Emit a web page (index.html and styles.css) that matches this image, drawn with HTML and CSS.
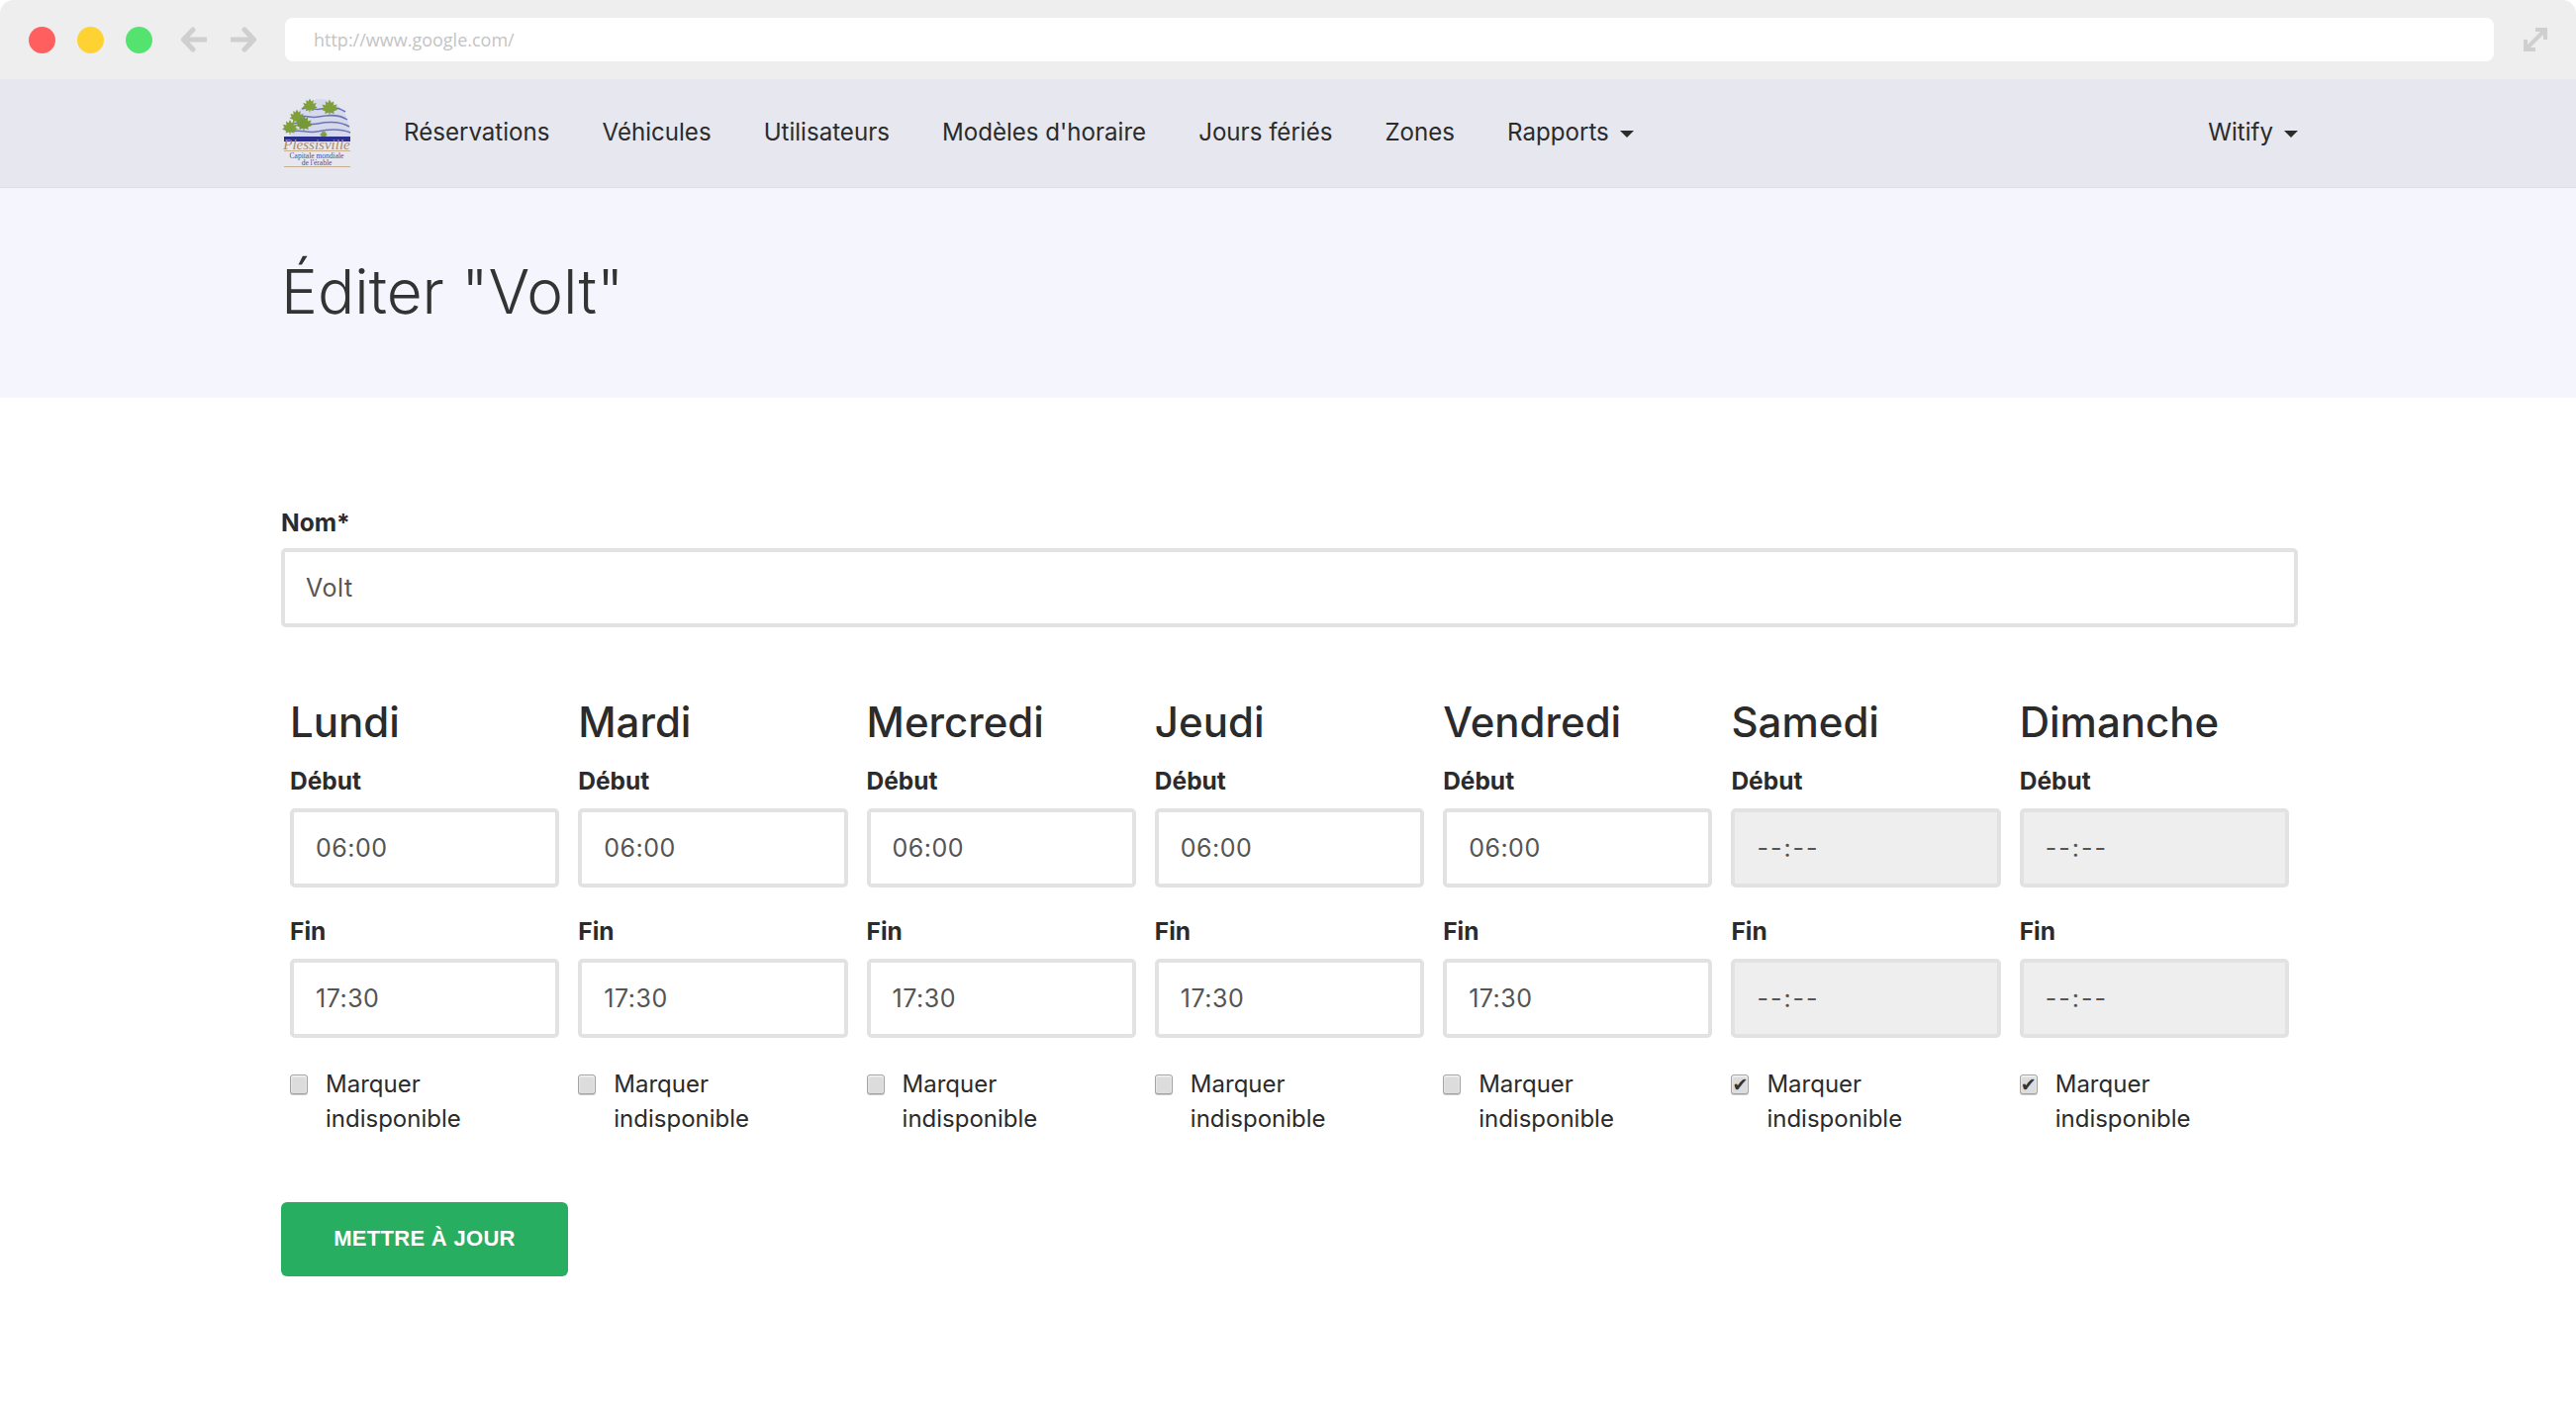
FILE: index.html
```html
<!DOCTYPE html>
<html lang="fr">
    <head>
        <meta charset="UTF-8" />
        <meta name="viewport" content="width=device-width, initial-scale=1.0" />
        <title>Éditer "Volt"</title>
        <link rel="stylesheet" href="styles.css">
    </head>
    <body>
        <div class="browser-bar">
            <span class="dot dot-red"></span>
            <span class="dot dot-yellow"></span>
            <span class="dot dot-green"></span>
            <svg class="arrow" width="26" height="26" viewBox="0 0 26 26"><path d="M12 3 2.5 13 12 23M3 13h22" /></svg>
            <svg class="arrow" width="26" height="26" viewBox="0 0 26 26"><path d="M14 3 23.500 13 14 23M23 13H1" /></svg>
            <div class="url">http://www.google.com/</div>
            <svg class="expand" width="24" height="24" viewBox="0 0 24 24"><path d="M2 22 22 2M12 2h10v10M2 12v10h10" /></svg>
        </div>

        <nav class="navbar">
            <div class="container navbar-inner">
                <svg class="logo" width="70" height="72" viewBox="0 0 70 72">
                    <defs>
                        <path id="leaf" d="M0-10 2-6 5-8 4.500-3 9-4 7 0 10 2 5 4 5.500 7 1 5.500 0 10-1 5.500-5.500 7-5 4-10 2-7 0-9-4-4.500-3-5-8-2-6z" />
                    </defs>
                    <path d="M9 39C9 15 24 1 39 1s30 14 30 38z" fill="#d6d9ec" />
                    <path d="M20 11c8-3 12 2 20 0s14-3 24 3M13 19c10-3 14 2 24 0s20-3 29 3M10 26c10-3 16 2 26 0s22-3 32 3M9 34c10-3 16 2 26 0s24-3 34 1" fill="none" stroke="#6d74b6" stroke-width="1.500" />
                    <use href="#leaf" transform="translate(28 8) scale(.75)" fill="#7f9f3b" />
                    <use href="#leaf" transform="translate(48 10) scale(.85)" fill="#7f9f3b" />
                    <use href="#leaf" transform="translate(15 19) scale(.75)" fill="#7f9f3b" />
                    <use href="#leaf" transform="translate(22 26) scale(.85)" fill="#76983a" />
                    <use href="#leaf" transform="translate(8 30) scale(.8)" fill="#7f9f3b" />
                    <use href="#leaf" transform="translate(42 37) scale(.4)" fill="#7f9f3b" />
                    <rect x="2" y="39" width="67" height="5" fill="#2b2f8e" />
                    <text class="logo-name" x="35" y="52" text-anchor="middle">Plessisville</text>
                    <rect x="2" y="53" width="67" height="1" fill="#c8ae8c" />
                    <text class="logo-small" x="35" y="61" text-anchor="middle">Capitale mondiale</text>
                    <text class="logo-small" x="35" y="68" text-anchor="middle">de l'érable</text>
                    <rect x="2" y="69" width="67" height="1" fill="#c8ae8c" />
                </svg>
                <ul class="nav-links">
                    <li><a href="#">Réservations</a></li>
                    <li><a href="#">Véhicules</a></li>
                    <li><a href="#">Utilisateurs</a></li>
                    <li><a href="#">Modèles d'horaire</a></li>
                    <li><a href="#">Jours fériés</a></li>
                    <li><a href="#">Zones</a></li>
                    <li><a href="#" class="caret">Rapports</a></li>
                </ul>
                <a href="#" class="caret user-link">Witify</a>
            </div>
        </nav>

        <header class="hero">
            <div class="container">
                <h1>Éditer "Volt"</h1>
            </div>
        </header>

        <form class="container edit-form" action="">
            <div class="field-name">
                <label for="name">Nom*</label>
                <input type="text" id="name" class="input" value="Volt" />
            </div>

            <div class="days">
                <div class="day">
                    <h2>Lundi</h2>
                    <label>Début</label>
                    <input type="text" class="input" value="06:00" />
                    <label>Fin</label>
                    <input type="text" class="input" value="17:30" />
                    <label class="off"><input type="checkbox" /><span>Marquer indisponible</span></label>
                </div>
                <div class="day">
                    <h2>Mardi</h2>
                    <label>Début</label>
                    <input type="text" class="input" value="06:00" />
                    <label>Fin</label>
                    <input type="text" class="input" value="17:30" />
                    <label class="off"><input type="checkbox" /><span>Marquer indisponible</span></label>
                </div>
                <div class="day">
                    <h2>Mercredi</h2>
                    <label>Début</label>
                    <input type="text" class="input" value="06:00" />
                    <label>Fin</label>
                    <input type="text" class="input" value="17:30" />
                    <label class="off"><input type="checkbox" /><span>Marquer indisponible</span></label>
                </div>
                <div class="day">
                    <h2>Jeudi</h2>
                    <label>Début</label>
                    <input type="text" class="input" value="06:00" />
                    <label>Fin</label>
                    <input type="text" class="input" value="17:30" />
                    <label class="off"><input type="checkbox" /><span>Marquer indisponible</span></label>
                </div>
                <div class="day">
                    <h2>Vendredi</h2>
                    <label>Début</label>
                    <input type="text" class="input" value="06:00" />
                    <label>Fin</label>
                    <input type="text" class="input" value="17:30" />
                    <label class="off"><input type="checkbox" /><span>Marquer indisponible</span></label>
                </div>
                <div class="day">
                    <h2>Samedi</h2>
                    <label>Début</label>
                    <input type="text" class="input input-off" value="--:--" disabled />
                    <label>Fin</label>
                    <input type="text" class="input input-off" value="--:--" disabled />
                    <label class="off"><input type="checkbox" checked /><span>Marquer indisponible</span></label>
                </div>
                <div class="day">
                    <h2>Dimanche</h2>
                    <label>Début</label>
                    <input type="text" class="input input-off" value="--:--" disabled />
                    <label>Fin</label>
                    <input type="text" class="input input-off" value="--:--" disabled />
                    <label class="off"><input type="checkbox" checked /><span>Marquer indisponible</span></label>
                </div>
            </div>

            <button type="button" class="btn-save">Mettre à jour</button>
        </form>
    </body>
</html>
```

FILE: styles.css
```css
* {
    box-sizing: border-box;
}

html,
body {
    height: 100%;
}

body {
    margin: 0;
    overflow: hidden;
    color: #2b2b2b;
    background-color: #fff;
    font-family: "Inter", "Liberation Sans", sans-serif;
    font-size: 24px;
}

.container {
    width: 2038px;
    margin-left: 284px;
}

/* fake browser chrome */
.browser-bar {
    display: flex;
    align-items: center;
    height: 80px;
    padding: 0 29px;
    border-radius: 14px 14px 0 0;
    background-color: #eee;
}

.dot {
    width: 27px;
    height: 27px;
    margin-right: 22px;
    border-radius: 50%;
}

.dot-red {
    background-color: #ff5f5f;
}

.dot-yellow {
    background-color: #ffd234;
}

.dot-green {
    margin-right: 29px;
    background-color: #55e370;
}

.arrow {
    margin-right: 24px;
    fill: none;
    stroke: #cfcfcf;
    stroke-width: 5;
    stroke-linecap: round;
    stroke-linejoin: round;
}

.url {
    flex: 1;
    height: 44px;
    margin-left: 5px;
    padding-left: 29px;
    border-radius: 8px;
    color: #c4c4c4;
    background-color: #fff;
    font-family: "Open Sans", sans-serif;
    font-size: 18px;
    line-height: 44px;
}

.expand {
    margin-left: 30px;
    fill: none;
    stroke: #cfcfcf;
    stroke-width: 4;
}

/* navbar */
.navbar {
    height: 110px;
    border-bottom: 1px solid #dfe0e6;
    background-color: #e6e7ef;
    font-size: 24.100px;
}

.navbar-inner {
    display: flex;
    align-items: center;
    height: 100%;
}

.logo {
    flex: none;
    margin-left: 1px;
}

.logo-name {
    fill: #a98a63;
    font-family: "Liberation Serif", serif;
    font-size: 15px;
    font-style: italic;
}

.logo-small {
    fill: #4a4f9e;
    font-family: "Liberation Serif", serif;
    font-size: 7.500px;
}

.nav-links {
    display: flex;
    gap: 53px;
    margin: 0 0 0 53px;
    padding: 0 0 3px;
    list-style: none;
}

.navbar a {
    color: #2b2b2b;
    text-decoration: none;
}

.caret::after {
    content: "";
    display: inline-block;
    margin-left: 11px;
    border-top: 7px solid #2b2b2b;
    border-right: 7px solid transparent;
    border-left: 7px solid transparent;
    vertical-align: 3px;
}

.user-link {
    margin-left: auto;
    padding-bottom: 3px;
}

/* title */
.hero {
    height: 212px;
    background-color: #f4f5fd;
}

.hero h1 {
    margin: 0;
    padding-top: 60px;
    color: #333;
    font-size: 62px;
    font-weight: 300;
    line-height: 90px;
}

/* form */
.edit-form {
    padding-top: 108px;
}

.edit-form label {
    display: block;
    font-size: 24.500px;
    font-weight: 700;
    line-height: 36px;
}

.field-name .input {
    margin-top: 8px;
    padding-left: 21px;
}

.input {
    display: block;
    width: 100%;
    height: 80px;
    padding: 0 22px;
    border: 4px solid #e2e2e2;
    border-radius: 5px;
    color: #555;
    background-color: #fff;
    font-family: inherit;
    font-size: 25px;
    letter-spacing: 0.5px;
    outline: none;
}

.input-off {
    background-color: #eee;
    letter-spacing: 2px;
}

.days {
    display: grid;
    grid-template-columns: repeat(7, 1fr);
    gap: 19px;
    margin-top: 71px;
    padding: 0 9px;
}

.day h2 {
    margin: 0 0 16px;
    font-size: 42px;
    font-weight: 500;
    line-height: 50px;
}

.day label {
    margin-bottom: 10px;
}

.day .input {
    margin-bottom: 25.500px;
}

.day .off {
    display: flex;
    margin-top: 29px;
    font-size: 24px;
    font-weight: 400;
    line-height: 35px;
}

.off input {
    flex: none;
    width: 18px;
    height: 20px;
    margin: 8px 18px 0 0;
    border: 1px solid #a3a3a3;
    border-radius: 3px;
    background-color: #dcdcdc;
    box-shadow: inset 0 1px 2px #fff, 0 1px 0 #c8c8c8;
    font-size: 19px;
    line-height: 18px;
    text-align: center;
    appearance: none;
}

.off input:checked::after {
    content: "✔";
    display: block;
    color: #333;
    font-family: "DejaVu Sans", sans-serif;
}

.btn-save {
    display: block;
    width: 290px;
    height: 75px;
    margin-top: 57px;
    border: 0;
    border-radius: 6px;
    color: #fff;
    background-color: #27ae60;
    font-family: "Liberation Sans", sans-serif;
    font-size: 22px;
    font-weight: 700;
    letter-spacing: 0.3px;
    text-transform: uppercase;
}
```
